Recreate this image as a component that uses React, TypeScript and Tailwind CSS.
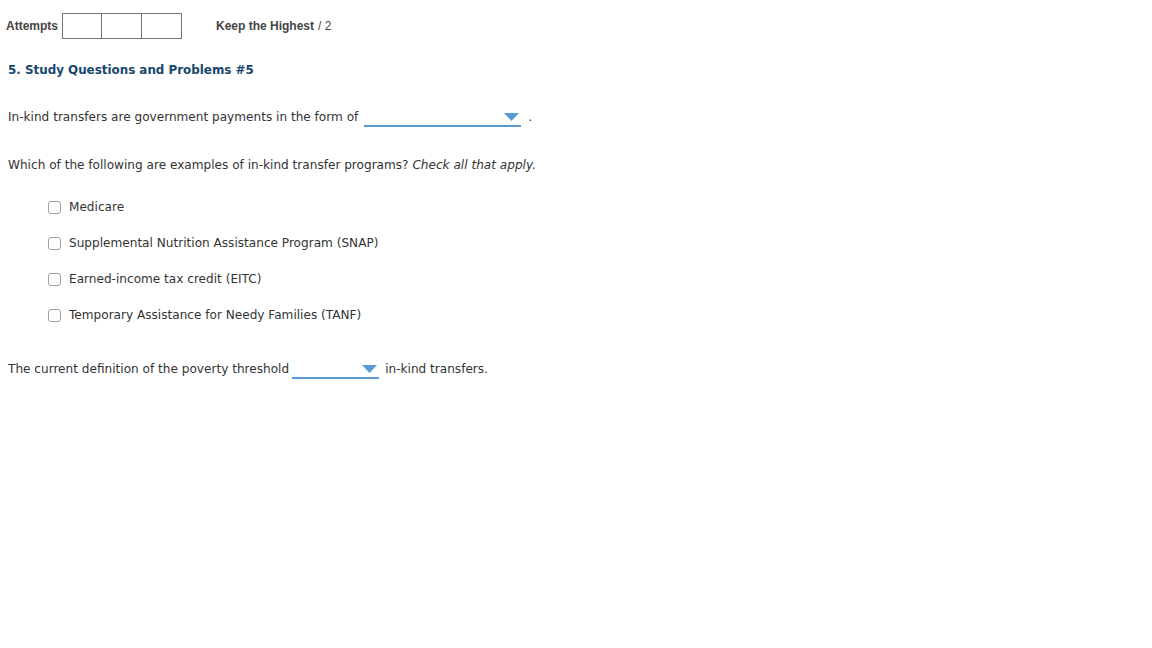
import React from "react"

function Dropdown({ width }: { width: string }) {
  return (
    <span className={`relative inline-block align-middle h-[19px] ${width} border-b-2 border-[#5b9bd5]`}>
      <svg
        className="absolute right-[2px] top-[5px]"
        width="15"
        height="8"
        viewBox="0 0 15 8"
      >
        <polygon points="0,0 15,0 7.5,8" fill="#5b9bd5" />
      </svg>
    </span>
  )
}

export default function App() {
  const options = [
    "Medicare",
    "Supplemental Nutrition Assistance Program (SNAP)",
    "Earned-income tax credit (EITC)",
    "Temporary Assistance for Needy Families (TANF)",
  ]

  return (
    <div className="w-[1152px] h-[648px] bg-white text-[#333] overflow-hidden">
      {/* attempts header */}
      <div className="flex items-center pt-[13px] pl-[6px] font-['Liberation_Sans',Arial,sans-serif] text-[12px]">
        <span className="font-bold text-[#444] mr-[4px]">Attempts</span>
        <div className="flex">
          <div className="w-[40px] h-[26px] border border-[#777]" />
          <div className="w-[40px] h-[26px] border border-l-0 border-[#777]" />
          <div className="w-[40px] h-[26px] border border-l-0 border-[#777]" />
        </div>
        <span className="ml-[34px] font-bold text-[#444]">Keep the Highest</span>
        <span className="ml-[4px] text-[#444]">/ 2</span>
      </div>

      <div className="font-['DejaVu_Sans',Verdana,sans-serif] text-[12.1px] px-[8px]">
        <h2 className="mt-[23px] font-bold text-[11.9px] text-[#17466e]">
          5. Study Questions and Problems #5
        </h2>

        <p className="mt-[28px] flex items-center">
          <span>In-kind transfers are government payments in the form of</span>
          <span className="ml-[6px]">
            <Dropdown width="w-[157px]" />
          </span>
          <span className="ml-[7px]">.</span>
        </p>

        <p className="mt-[29px]">
          Which of the following are examples of in-kind transfer programs?{" "}
          <em>Check all that apply.</em>
        </p>

        <div className="mt-[26px] pl-[40px] flex flex-col gap-[22px]">
          {options.map((opt) => (
            <label key={opt} className="flex items-center h-[14px]">
              <span className="w-[13px] h-[13px] border border-[#a0a0a0] rounded-[3px] bg-white" />
              <span className="ml-[8px]">{opt}</span>
            </label>
          ))}
        </div>

        <p className="mt-[38px] flex items-center">
          <span>The current definition of the poverty threshold</span>
          <span className="ml-[3px]">
            <Dropdown width="w-[87px]" />
          </span>
          <span className="ml-[6px]">in-kind transfers.</span>
        </p>
      </div>
    </div>
  )
}
